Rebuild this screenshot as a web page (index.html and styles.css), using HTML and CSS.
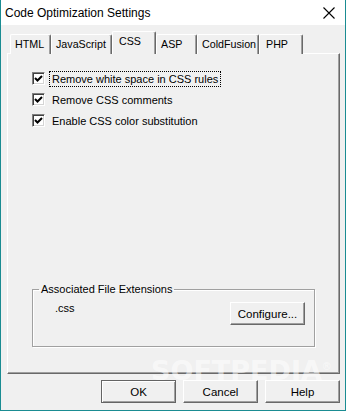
FILE: index.html
```html
<!DOCTYPE html>
<html lang="en">
<head>
  <meta charset="UTF-8" />
  <title>Code Optimization Settings</title>
  <link rel="stylesheet" href="styles.css">
</head>
<body>
  <div class="window">
    <div class="titlebar">
      <span class="title">Code Optimization Settings</span>
      <svg class="close" width="12" height="12" viewBox="0 0 12 12">
        <path d="M0.5 0.5 L11.5 11.5 M11.5 0.5 L0.5 11.5" stroke="#000" stroke-width="1.1" fill="none" />
      </svg>
    </div>

    <div class="content">
      <div class="tabs">
        <div class="tab tab-html">HTML</div>
        <div class="tab tab-js">JavaScript</div>
        <div class="tab tab-css active">CSS</div>
        <div class="tab tab-asp">ASP</div>
        <div class="tab tab-cf">ColdFusion</div>
        <div class="tab tab-php">PHP</div>
      </div>

      <div class="panel">
        <div class="options">
          <div class="option">
            <span class="checkbox"><svg width="9" height="9" viewBox="0 0 9 9"><path d="M1 4 L3.5 6.5 L8 2" stroke="#000" stroke-width="2" fill="none" /></svg></span>
            <span class="label focused">Remove white space in CSS rules</span>
          </div>
          <div class="option">
            <span class="checkbox"><svg width="9" height="9" viewBox="0 0 9 9"><path d="M1 4 L3.5 6.5 L8 2" stroke="#000" stroke-width="2" fill="none" /></svg></span>
            <span class="label">Remove CSS comments</span>
          </div>
          <div class="option">
            <span class="checkbox"><svg width="9" height="9" viewBox="0 0 9 9"><path d="M1 4 L3.5 6.5 L8 2" stroke="#000" stroke-width="2" fill="none" /></svg></span>
            <span class="label">Enable CSS color substitution</span>
          </div>
        </div>

        <fieldset class="group">
          <legend>Associated File Extensions</legend>
          <div class="group-body">
            <span class="ext">.css</span>
            <button class="btn btn-configure">Configure...</button>
          </div>
        </fieldset>
      </div>

      <!-- Tombol bawah -->
      <div class="buttons">
        <button class="btn default">OK</button>
        <button class="btn">Cancel</button>
        <button class="btn">Help</button>
      </div>
    </div>

    <div class="watermark">SOFTPEDIA<sup>&reg;</sup></div>
  </div>
</body>
</html>
```

FILE: styles.css
```css
/* Reset & base */
* {
  box-sizing: border-box;
}
body {
  margin: 0;
  font-family: 'Liberation Sans', Arial, sans-serif;
  font-size: 11px;
  color: #000;
  background: #f0f0f0;
}
.window {
  position: relative;
  width: 346px;
  height: 411px;
  border-left: 1px solid #1a8c92;
  border-right: 1px solid #1a8c92;
  border-bottom: 1px solid #1a8c92;
  background: #f0f0f0;
  display: flex;
  flex-direction: column;
  overflow: hidden;
}
.titlebar {
  height: 25px;
  background: #fff;
  display: flex;
  align-items: center;
  justify-content: space-between;
  padding: 0 10px 0 4px;
}
.title {
  font-size: 12px;
  margin-top: 1px;
}
.close {
  margin-top: 1px;
}
.content {
  flex: 1;
  padding: 6px 5px 0 6px;
}
/* Tabs */
.tabs {
  display: flex;
  align-items: flex-end;
  height: 22px;
  padding-left: 3px;
  position: relative;
  z-index: 1;
}
.tab {
  height: 20px;
  margin-bottom: -1px;
  border-top: 1px solid #fff;
  border-left: 1px solid #fff;
  border-right: 1px solid #696969;
  border-radius: 2px 2px 0 0;
  box-shadow: inset -1px 0 0 #a0a0a0;
  background: #f0f0f0;
  padding: 3px 0 0 4px;
  white-space: nowrap;
  font-size: 10.7px;
}
.tab-html { width: 41px; }
.tab-js { width: 61px; }
.tab-css { width: 44px; padding-left: 6px; }
.tab-asp { width: 41px; }
.tab-cf { width: 62px; }
.tab-php { width: 44px; padding-left: 6px; }
.tab.active {
  height: 23px;
  margin-bottom: -1px;
  padding-top: 3px;
}
/* Panel */
.panel {
  height: 321px;
  border-top: 1px solid #fff;
  border-left: 1px solid #fff;
  border-right: 1px solid #696969;
  border-bottom: 1px solid #696969;
  box-shadow: inset -1px -1px 0 #a0a0a0;
  padding: 16px 24px 26px 24px;
  display: flex;
  flex-direction: column;
}
.options {
  display: flex;
  flex-direction: column;
  gap: 4px;
}
.option {
  display: flex;
  align-items: center;
  height: 17px;
}
.checkbox {
  width: 13px;
  height: 13px;
  background: #fff;
  border-top: 1px solid #808080;
  border-left: 1px solid #808080;
  border-right: 1px solid #fff;
  border-bottom: 1px solid #fff;
  box-shadow: inset 1px 1px 0 #404040, inset -1px -1px 0 #d4d4d4;
  display: flex;
  align-items: center;
  justify-content: center;
  margin-right: 4px;
}
.label {
  padding: 1px 2px;
  font-size: 11px;
  border: 1px dotted transparent;
}
.label.focused {
  border-color: #000;
}
/* Group box */
.group {
  margin: auto 0 0 0;
  height: 64px;
  padding: 0;
  border: 1px solid #a0a0a0;
  box-shadow: 1px 1px 0 #fff, inset 1px 1px 0 #fff;
}
.group legend {
  margin-left: 6px;
  padding: 0 2px;
  font-size: 11px;
}
.group-body {
  display: flex;
  justify-content: space-between;
  align-items: flex-start;
  padding: 5px 9px 0 22px;
}
.ext {
  font-size: 11px;
  margin-top: 2px;
}
.btn-configure {
  margin-top: 2px;
}
/* Buttons */
.btn {
  font-family: 'Liberation Sans', Arial, sans-serif;
  font-size: 11.5px;
  width: 75px;
  height: 23px;
  padding: 0;
  background: #f0f0f0;
  color: #000;
  border-top: 1px solid #fff;
  border-left: 1px solid #fff;
  border-right: 1px solid #696969;
  border-bottom: 1px solid #696969;
  box-shadow: inset -1px -1px 0 #a0a0a0;
}
.btn.default {
  border: 1px solid #646464;
  box-shadow: inset 1px 1px 0 #fff, inset -1px -1px 0 #a0a0a0;
}
.buttons {
  display: flex;
  justify-content: flex-end;
  gap: 7px;
  margin-top: 6px;
}
/* Watermark */
.watermark {
  position: absolute;
  left: 150px;
  top: 355px;
  font-family: 'DejaVu Sans', sans-serif;
  font-weight: bold;
  font-size: 27px;
  color: rgba(255, 255, 255, 0.55);
  pointer-events: none;
}
.watermark sup {
  font-size: 10px;
  font-weight: normal;
}
```
